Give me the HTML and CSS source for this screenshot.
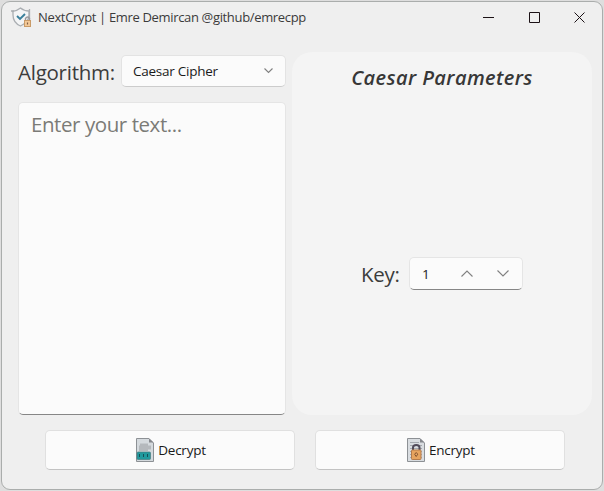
FILE: index.html
```html
<!DOCTYPE html>
<html lang="en">
<head>
<meta charset="utf-8">
<title>NextCrypt</title>
<link rel="stylesheet" href="styles.css">
</head>
<body>
<div class="window">
  <header class="titlebar">
    <svg class="app-icon" width="22" height="22" viewBox="0 0 22 22" fill="none">
      <path d="M1 4.5Q6 4 9.5 1Q13 4 18 4V8C18 14 14 17 9.500 19C5 17 2 14 2 8V4" fill="#f4f5f6" stroke="#aaaeb2" stroke-width="1.300"/>
      <path d="M0 4h3M18.500 2v10" stroke="#aaaeb2" stroke-width="1.300"/>
      <path d="M6 9l3 3 5-5" stroke="#397f9b" stroke-width="1.900"/>
      <path d="M14.500 14v-2.500q2-3 4 0V14" stroke="#99999d" stroke-width="1.400"/>
      <rect x="13.500" y="13.500" width="6" height="6" fill="#f3c998" stroke="#c99b68"/>
      <path d="M16.500 15.500v2" stroke="#805c43" stroke-width="1.200"/>
    </svg>
    <h1 class="title">NextCrypt | Emre Demircan @github/emrecpp</h1>
    <div class="controls">
      <svg width="11" height="11" viewBox="0 0 11 11"><path d="M0 5.500h11"/></svg>
      <svg width="11" height="11" viewBox="0 0 11 11"><path d="M.5.500h10v10H.5z"/></svg>
      <svg width="11" height="11" viewBox="0 0 11 11"><path d="M.5.500l10 10M10.500.500l-10 10"/></svg>
    </div>
  </header>
  <main class="content">
    <section class="editor">
      <div class="algorithm">
        <span class="label algorithm-label">Algorithm:</span>
        <div class="select"><span class="select-text">Caesar Cipher</span>
          <svg width="9" height="6" viewBox="0 0 9 6"><path d="M.5.500l4 4 4-4"/></svg>
        </div>
      </div>
      <div class="textarea"><span class="placeholder">Enter your text...</span></div>
    </section>
    <section class="panel">
      <h2 class="heading">Caesar Parameters</h2>
      <div class="key-row">
        <span class="label key-label">Key:</span>
        <div class="spin"><span class="value">1</span>
          <svg width="12" height="7" viewBox="0 0 12 7"><path d="M.5 6.500L6 1l5.500 5.500"/></svg>
          <svg width="12" height="7" viewBox="0 0 12 7"><path d="M.5.500L6 6 11.500.500"/></svg>
        </div>
      </div>
    </section>
  </main>
  <footer class="actions">
    <div class="button">
      <svg width="18" height="24" viewBox="0 0 18 24">
        <path d="M.5.500H13L17.500 5v18.500H.5z" fill="#d5dade" stroke="#8d9195"/>
        <path d="M13 .5V4.500h4.500z" fill="#85888d"/>
        <path d="M4 5.500h8v2h3v4h-3v1.500H3V7.500h1z" fill="#b5b9bd"/>
        <rect x="1" y="14" width="13.500" height="7.500" rx="1" fill="#20999d" stroke="#477c80" stroke-width=".7"/>
        <path d="M3.500 16v3M7.500 16v3M11.500 16v3" stroke="#174f57"/>
      </svg>
      <span class="action-text decrypt">Decrypt</span>
    </div>
    <div class="button">
      <svg width="18" height="24" viewBox="0 0 18 24">
        <path d="M.5.500H13L17.500 5v18.500H.5z" fill="#d9dde1" stroke="#8d9195"/>
        <path d="M13 .5V4.500h4.500z" fill="#85888d"/>
        <path d="M3 4.500h9M3 7.500h12M3 10.500h12M3 13.500h12M3 16.500h12M3 19.500h12" stroke="#a5a9af"/>
        <path d="M6 12V9.500C6 6 12.500 6 12.500 9.500V12" fill="none" stroke="#514b5a" stroke-width="2"/>
        <rect x="4.500" y="12" width="9.500" height="9.500" rx=".7" fill="#e7a45f" stroke="#b57c4c"/>
        <path d="M9.200 14.500l1.500 1.700-1.500 2.300-1.500-2.300z" fill="#f2ad65" stroke="#80512f"/>
      </svg>
      <span class="action-text encrypt">Encrypt</span>
    </div>
  </footer>
</div>
</body>
</html>
```
FILE: styles.css
```css
* { box-sizing: border-box; }
body { margin: 0; padding: 1px 1px 1px; height: 491px; background: #dedede; font-family: "Open Sans", "Noto Sans", sans-serif; overflow: hidden; }
.window { width: 602px; height: 489px; border: 1px solid #aaadac; border-radius: 9px; background: #efefef; }
svg { display: block; flex: none; }
span, h1, h2 { white-space: nowrap; }
.titlebar { display: flex; align-items: center; height: 50px; padding: 0 17px 19px 9px; }
.title { margin: 0 0 0 5px; width: 280px; padding-bottom: 1px; font-size: 13px; font-weight: 400; line-height: 18px; color: #3b3b3b; letter-spacing: -.34px; }
.controls { display: flex; gap: 35px; margin-left: auto; }
.controls svg { fill: none; stroke: #1c1216; stroke-width: 1; }
.controls svg:last-child { margin-left: -1px; }
.content { display: grid; grid-template-columns: 268px 300px; gap: 6px; padding-left: 16px; height: 363px; }
.editor { padding-top: 3px; }
.algorithm { display: flex; height: 32px; align-items: center; }
.label { color: #3c3c3c; font-size: 20.500px; line-height: 30px; letter-spacing: -.25px; }
.algorithm-label { width: 103px; padding-top: 2px; }
.select { display: flex; flex: 1; height: 32px; align-items: center; justify-content: space-between; padding: 0 12px 0 11px; border: 1px solid #e3e3e3; border-bottom-color: #cccccc; border-radius: 5px; background: #fbfbfb; }
.select-text, .value, .action-text { color: #1a1a1a; font-size: 13.500px; line-height: 20px; letter-spacing: -.25px; }
.select svg, .spin svg { fill: none; stroke: #808080; stroke-width: 1.100; }
.textarea { height: 313px; margin-top: 15px; padding: 6px 12px; border: 1px solid #e5e5e5; border-bottom-color: #868686; border-radius: 5px; background: #fbfbfb; }
.placeholder { display: block; color: #7b7b77; font-size: 20.500px; line-height: 30px; letter-spacing: -.43px; }
.panel { border-radius: 20px; background: #f4f4f4; }
.heading { margin: 0; padding-top: 11px; color: #373737; font-size: 20px; font-style: italic; font-weight: 600; line-height: 30px; letter-spacing: .4px; text-align: center; }
.key-row { display: flex; align-items: center; margin: 164px 0 0 69px; height: 33px; }
.key-label { width: 48px; padding-top: 1px; }
.spin { display: flex; align-items: center; width: 114px; height: 33px; padding: 0 13px 0 12px; border: 1px solid #e5e5e5; border-bottom-color: #868686; border-radius: 5px; background: #fbfbfb; }
.value { width: 39px; }
.spin svg + svg { margin-left: 24px; }
.actions { display: flex; gap: 20px; padding: 15px 0 0 43px; }
.button { display: flex; align-items: center; justify-content: center; gap: 4px; width: 250px; height: 40px; padding-left: 2px; border: 1px solid #e0e0e0; border-bottom-color: #c3c3c3; border-radius: 5px; background: #fbfbfb; }
```
